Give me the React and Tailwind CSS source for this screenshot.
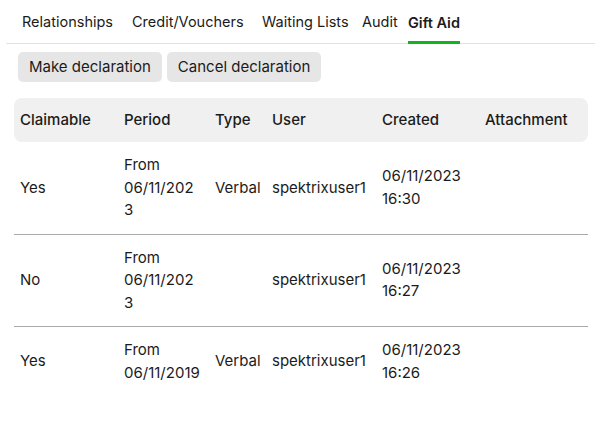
import React from 'react';

const rows = [
  { claimable: 'Yes', period: '06/11/2023', type: 'Verbal', user: 'spektrixuser1', date: '06/11/2023', time: '16:30' },
  { claimable: 'No', period: '06/11/2023', type: '', user: 'spektrixuser1', date: '06/11/2023', time: '16:27' },
  { claimable: 'Yes', period: '06/11/2019', type: 'Verbal', user: 'spektrixuser1', date: '06/11/2023', time: '16:26' },
];

const tabs = [
  { label: 'Relationships', w: 'w-[110px]' },
  { label: 'Credit/Vouchers', w: 'w-[130px]' },
  { label: 'Waiting Lists', w: 'w-[100px]' },
  { label: 'Audit', w: 'w-[46px]' },
  { label: 'Gift Aid', w: 'w-auto' },
];

export default function App() {
  return (
    <div className="w-[601px] h-[423px] bg-white text-[#1b1b1b] text-[15px] overflow-hidden" style={{ fontFamily: 'Inter, sans-serif' }}>
      {/* tabs */}
      <div className="mx-[6px] flex items-end pl-[16px] border-b border-[#e2e2e2] h-[44px] text-[14.5px]">
        {tabs.map((t) => (
          <div key={t.label} className={`${t.w} shrink-0 whitespace-nowrap`}>
            <span
              className={`inline-block leading-[18px] ${t.label === 'Gift Aid' ? 'font-semibold border-b-[3px] border-[#12b31f] pb-[9px] -mb-px' : 'pb-[12px]'}`}
            >
              {t.label}
            </span>
          </div>
        ))}
      </div>

      {/* actions */}
      <div className="flex gap-[5px] pl-[18px] pt-[8px]">
        <button className="h-[30px] px-[11px] rounded-[5px] bg-[#e6e6e6]">Make declaration</button>
        <button className="h-[30px] px-[11px] rounded-[5px] bg-[#e6e6e6]">Cancel declaration</button>
      </div>

      {/* table */}
      <table className="ml-[14px] mt-[16px] w-[574px] table-fixed border-collapse">
        <colgroup>
          <col className="w-[104px]" />
          <col className="w-[91px]" />
          <col className="w-[57px]" />
          <col className="w-[110px]" />
          <col className="w-[103px]" />
          <col className="w-[109px]" />
        </colgroup>
        <thead>
          <tr className="bg-[#f0f0f0]">
            {['Claimable', 'Period', 'Type', 'User', 'Created', 'Attachment'].map((h, i) => (
              <th
                key={h}
                className={`h-[44px] pl-[6px] text-left font-medium ${i === 0 ? 'rounded-l-[8px]' : ''} ${i === 5 ? 'rounded-r-[8px]' : ''}`}
              >
                {h}
              </th>
            ))}
          </tr>
        </thead>
        <tbody className="leading-[22.5px]">
          {rows.map((r, i) => (
            <tr key={i} className={i < rows.length - 1 ? 'border-b border-[#aaaaaa]' : ''}>
              <td className="pl-[6px] py-[12px]">{r.claimable}</td>
              <td className="pl-[6px] pr-[8px] py-[12px] break-all">From<br />{r.period}</td>
              <td className="pl-[6px] py-[12px]">{r.type}</td>
              <td className="pl-[6px] py-[12px]">{r.user}</td>
              <td className="pl-[6px] py-[12px]">{r.date}<br />{r.time}</td>
              <td className="pl-[6px] py-[12px]"></td>
            </tr>
          ))}
        </tbody>
      </table>
    </div>
  );
}
